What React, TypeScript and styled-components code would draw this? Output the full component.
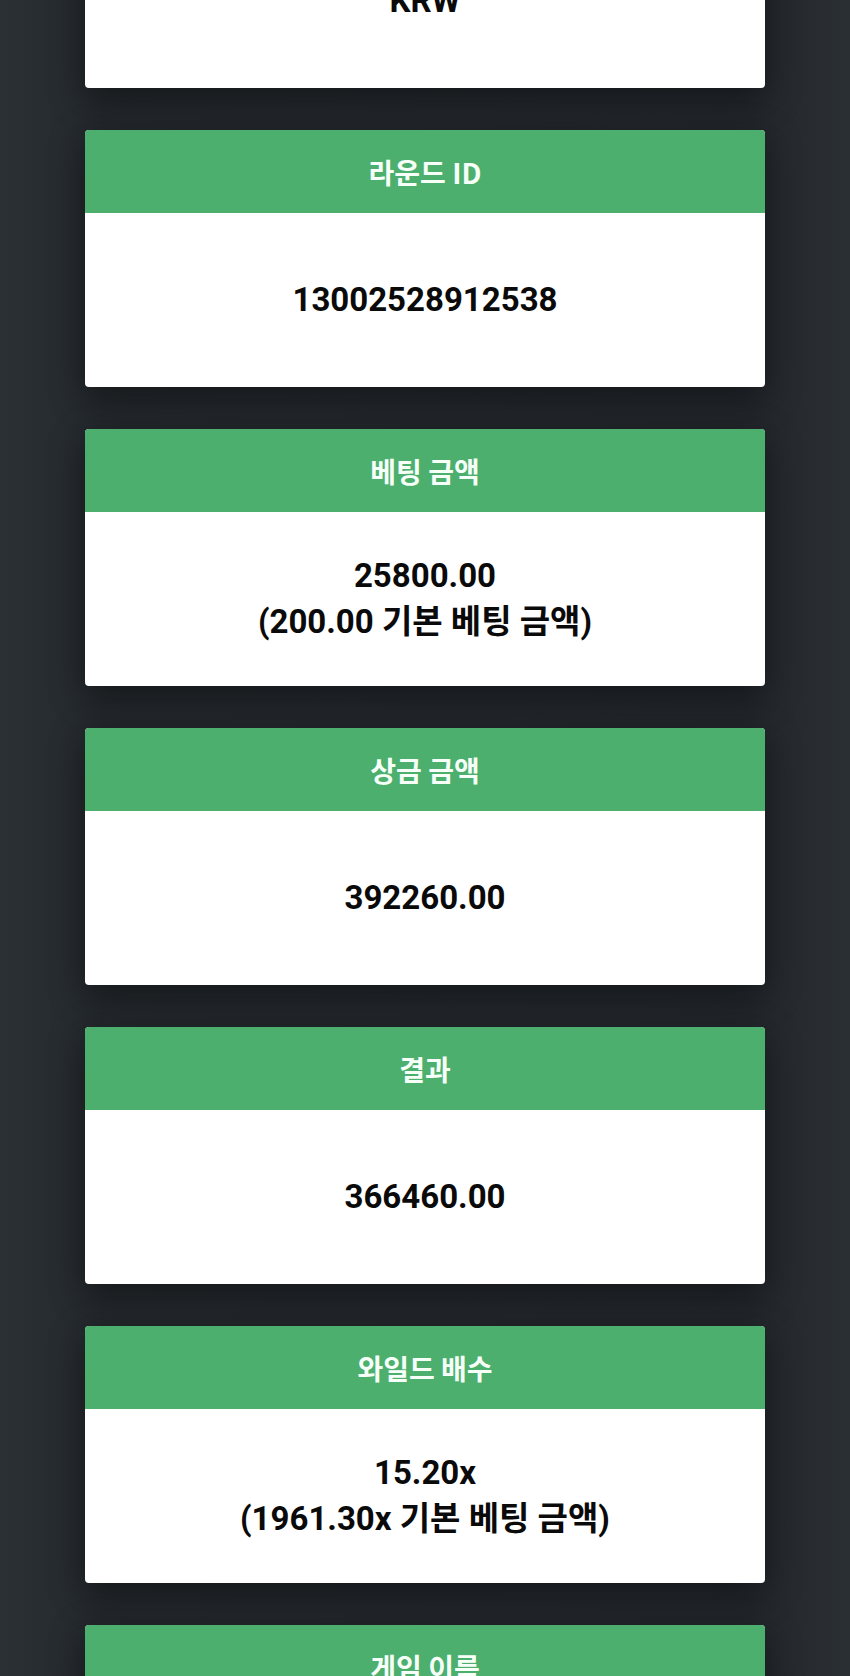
import styled, { createGlobalStyle } from "styled-components";

const GlobalStyle = createGlobalStyle`
  html, body {
    margin: 0;
    padding: 0;
    background: #282d31;
  }
  body {
    font-family: Roboto, "Noto Sans CJK KR", sans-serif;
    overflow: hidden;
  }
`;

const Page = styled.div`
  min-height: 1676px;
  background: linear-gradient(90deg, #2a3034 0%, #24292d 12%, #23272c 88%, #2a2f34 100%);
`;

const List = styled.div`
  width: 680px;
  margin: -169px auto 0;
  display: flex;
  flex-direction: column;
  gap: 42px;
`;

const Card = styled.section`
  border-radius: 4px;
  overflow: hidden;
  background: #fefffe;
  box-shadow: 0 10px 36px rgba(0, 0, 0, 0.45);
`;

const Header = styled.div`
  height: 83px;
  background: #4caf6e;
  color: #f6fff8;
  display: flex;
  align-items: center;
  justify-content: center;
  font-family: "Noto Sans CJK KR", Roboto, sans-serif;
  font-size: 28px;
  font-weight: 700;
  padding-top: 1px;
  box-sizing: border-box;
`;

const Body = styled.div`
  height: 174px;
  display: flex;
  flex-direction: column;
  align-items: center;
  justify-content: center;
  color: #0a0a0a;
  font-family: Roboto, "Noto Sans CJK KR", sans-serif;
  font-size: 33px;
  font-weight: 700;
  line-height: 46px;
  text-align: center;
`;

type Row = { title: string; lines: string[] };

const rows: Row[] = [
  { title: "통화", lines: ["KRW"] },
  { title: "라운드 ID", lines: ["13002528912538"] },
  { title: "베팅 금액", lines: ["25800.00", "(200.00 기본 베팅 금액)"] },
  { title: "상금 금액", lines: ["392260.00"] },
  { title: "결과", lines: ["366460.00"] },
  { title: "와일드 배수", lines: ["15.20x", "(1961.30x 기본 베팅 금액)"] },
  { title: "게임 이름", lines: ["와일드 바운티"] },
];

const App = () => {
  return (
    <Page>
      <GlobalStyle />
      <List>
        {rows.map((row) => (
          <Card key={row.title}>
            <Header>{row.title}</Header>
            <Body>
              {row.lines.map((line) => (
                <div key={line}>{line}</div>
              ))}
            </Body>
          </Card>
        ))}
      </List>
    </Page>
  );
};

export default App;
